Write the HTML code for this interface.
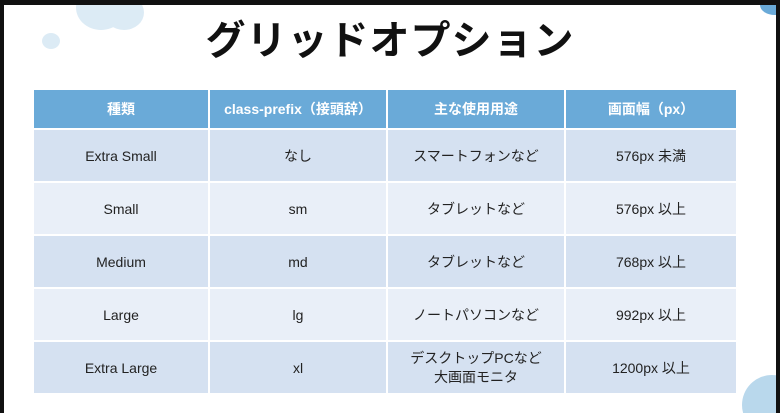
<!DOCTYPE html><html><head><meta charset="utf-8"><style>
html,body{margin:0;padding:0;}
body{width:780px;height:413px;background:#111;position:relative;overflow:hidden;font-family:"Liberation Sans","Noto Sans CJK JP",sans-serif;}
.slide{position:absolute;left:4px;top:5px;width:772px;height:408px;background:#fff;overflow:hidden;}
.c{position:absolute;background:#dcebf5;border-radius:50%;}
h1{position:absolute;left:0;width:772px;top:3px;margin:0;text-align:center;font-size:40px;font-weight:bold;color:#111;font-family:"Noto Sans CJK JP",sans-serif;letter-spacing:1px;}
table{position:absolute;left:28px;top:83px;width:706px;border-collapse:collapse;font-family:"Liberation Sans","Noto Sans CJK JP",sans-serif;}
td,th{border:2px solid #fff;text-align:center;font-size:14px;color:#222;padding:0;}
th{background:#6aaad8;color:#fff;height:38px;font-size:14px;font-weight:bold;}
tr.a td{background:#d5e1f1;height:51px;}
tr.b td{background:#e9eff8;height:51px;}
</style></head><body><div class="slide">
<div class="c" style="left:72px;top:-20px;width:50px;height:45px"></div>
<div class="c" style="left:100px;top:-10px;width:40px;height:35px"></div>
<div class="c" style="left:38px;top:28px;width:18px;height:16px"></div>
<div class="c" style="left:756px;top:-10px;width:30px;height:20px;background:#6aaad8"></div>
<div class="c" style="left:738px;top:370px;width:60px;height:60px;background:#b9d8ec"></div>
<h1>グリッドオプション</h1>
<table>
<tr><th style="width:174px">種類</th><th style="width:176px">class-prefix（接頭辞）</th><th style="width:176px">主な使用用途</th><th>画面幅（px）</th></tr>
<tr class="a"><td>Extra Small</td><td>なし</td><td>スマートフォンなど</td><td>576px 未満</td></tr>
<tr class="b"><td>Small</td><td>sm</td><td>タブレットなど</td><td>576px 以上</td></tr>
<tr class="a"><td>Medium</td><td>md</td><td>タブレットなど</td><td>768px 以上</td></tr>
<tr class="b"><td>Large</td><td>lg</td><td>ノートパソコンなど</td><td>992px 以上</td></tr>
<tr class="a"><td>Extra Large</td><td>xl</td><td style="line-height:19px">デスクトップPCなど<br>大画面モニタ</td><td>1200px 以上</td></tr>
</table>
</div></body></html>
